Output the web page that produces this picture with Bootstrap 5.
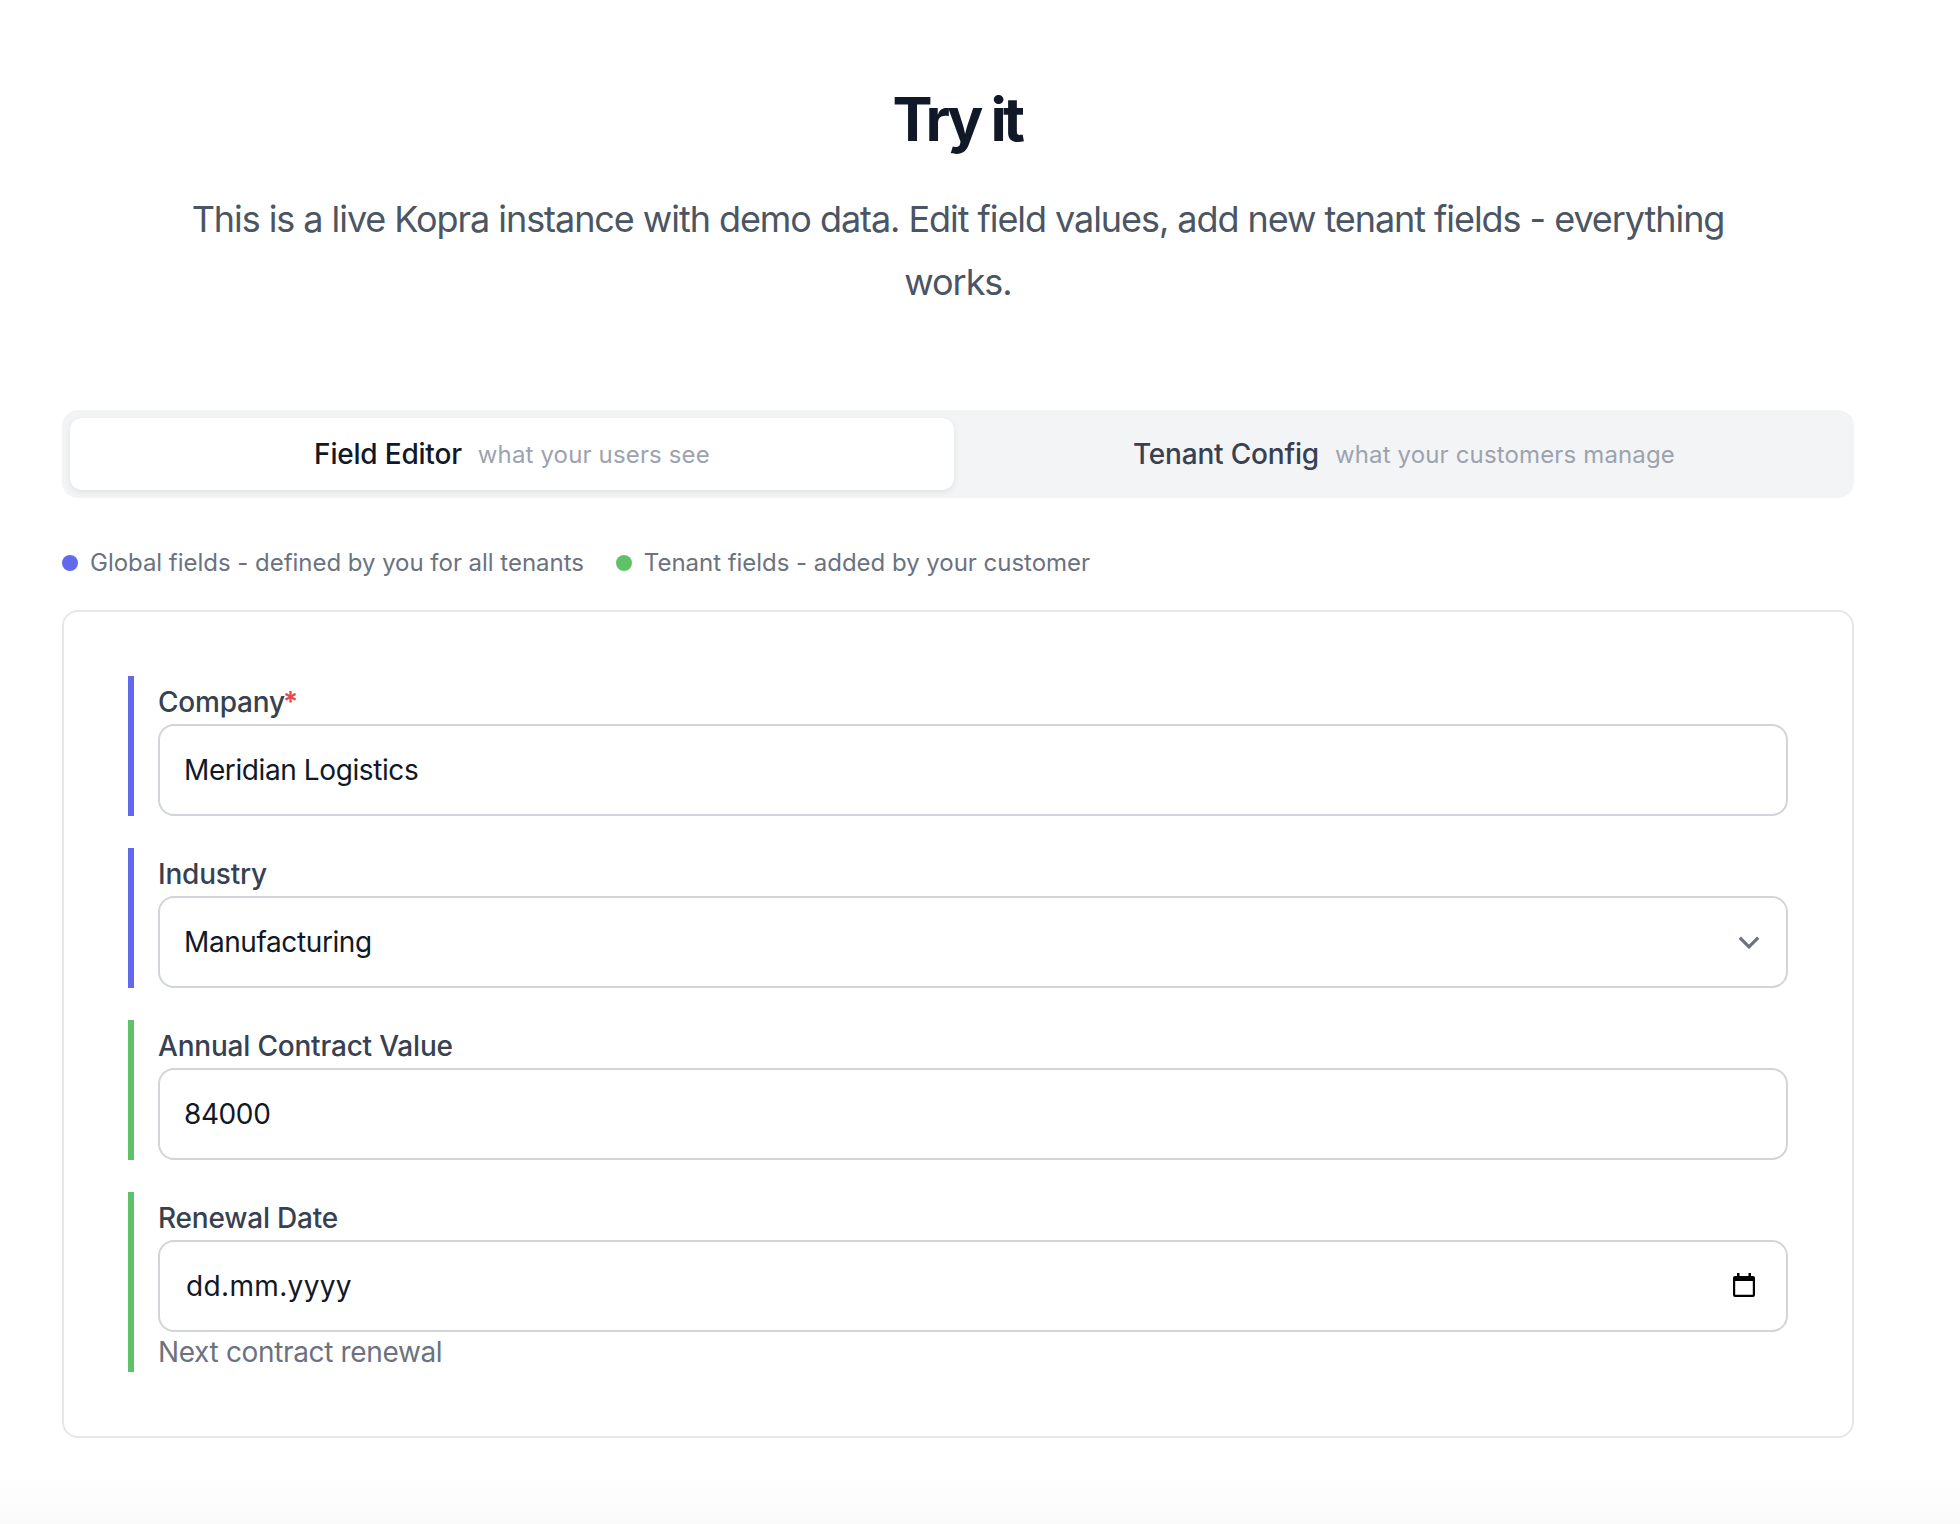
<!DOCTYPE html>
<html lang="en">
<head>
<meta charset="utf-8">
<title>Try it</title>
<link href="https://cdn.jsdelivr.net/npm/bootstrap@5.3.0/dist/css/bootstrap.min.css" rel="stylesheet">
<style>
html, body { height: 100%; }
body { font-family: "Inter", "Liberation Sans", sans-serif; background: #fff; color: #111827; -webkit-font-smoothing: antialiased; }
.page-wrap { min-height: 1524px; padding: 83px 44px 0 0; display: flex; flex-direction: column; align-items: center; background: linear-gradient(#fff 0, #fff 1470px, #fafafa 1524px); }
.try-title { font-size: 60px; line-height: 72px; font-weight: 700; letter-spacing: -3.6px; color: #111827; margin: 0 2px 33px 0; }
.try-sub { width: 1560px; font-size: 36px; line-height: 63px; letter-spacing: -1.06px; color: #4b5563; margin-bottom: 96px; }
.demo { width: 1792px; }
.tabbar { background: #f3f4f6; border-radius: 16px; padding: 8px; height: 88px; margin-bottom: 49px; }
.tabitem { flex: 1 1 0; height: 72px; border-radius: 12px; gap: 16px; font-size: 28px; font-weight: 500; letter-spacing: -.2px; color: #374151; }
.tabitem.on { background: #fff; color: #111827; box-shadow: 0 2px 6px rgba(0,0,0,.08); }
.tabhint { font-size: 24px; font-weight: 400; letter-spacing: .15px; color: #9ca3af; padding-top: 2px; }
.legendrow { height: 32px; gap: 32px; margin-bottom: 31px; font-size: 24px; line-height: 32px; letter-spacing: -.03px; color: #6b7280; }
.legenditem { gap: 12px; }
.dot { width: 16px; height: 16px; border-radius: 50%; }
.dot-global { background: #6269ec; }
.dot-tenant { background: #5fc26b; }
.formcard { border: 2px solid #e5e7eb; border-radius: 16px; padding: 64px; gap: 32px; background: #fff; }
.fieldrow { border-left: 6px solid #6269ec; padding-left: 24px; }
.fieldrow.tenant { border-left-color: #5fc26b; }
.fieldlabel { display: block; font-size: 28px; line-height: 40px; font-weight: 500; letter-spacing: -.2px; color: #374151; padding-top: 6px; margin-bottom: 2px; }
.req { color: #e5484d; font-weight: 600; letter-spacing: -1px; margin-left: -2px; }
.fieldinput.form-control, .fieldinput.form-select { height: 92px; border: 2px solid #d1d5db; border-radius: 16px; padding: 24px; font-size: 28px; line-height: 40px; letter-spacing: -.4px; color: #111827; box-shadow: none; }
.fieldinput.form-select { background-image: url("data:image/svg+xml,%3Csvg xmlns='http://www.w3.org/2000/svg' viewBox='0 0 20 12'%3E%3Cpath d='M1.5 1.5l8.5 8.5 8.5-8.5' fill='none' stroke='%236b7280' stroke-width='3'/%3E%3C/svg%3E"); background-position: right 26px center; background-size: 22px 13px; }
.fieldinput.form-control.dateinput { padding-left: 26px; letter-spacing: .35px; }
.calicon { right: 33px; top: 33px; width: 22px; height: 24px; pointer-events: none; }
.fieldhint { font-size: 28px; line-height: 40px; letter-spacing: -.35px; color: #6b7280; }
</style>
</head>
<body>
<div class="page-wrap">
  <h1 class="try-title text-center">Try it</h1>
  <p class="try-sub text-center">This is a live Kopra instance with demo data. Edit field values, add new tenant fields - everything works.</p>
  <div class="demo">
    <div class="tabbar d-flex gap-2">
      <div class="tabitem on d-flex align-items-center justify-content-center"><span>Field Editor</span><span class="tabhint">what your users see</span></div>
      <div class="tabitem d-flex align-items-center justify-content-center"><span>Tenant Config</span><span class="tabhint">what your customers manage</span></div>
    </div>
    <div class="legendrow d-flex align-items-center">
      <div class="legenditem d-flex align-items-center"><span class="dot dot-global"></span><span>Global fields - defined by you for all tenants</span></div>
      <div class="legenditem d-flex align-items-center"><span class="dot dot-tenant"></span><span>Tenant fields - added by your customer</span></div>
    </div>
    <form class="formcard d-flex flex-column">
      <div class="fieldrow">
        <label class="fieldlabel" for="f1">Company<span class="req">*</span></label>
        <input id="f1" class="form-control fieldinput" type="text" value="Meridian Logistics">
      </div>
      <div class="fieldrow">
        <label class="fieldlabel" for="f2">Industry</label>
        <select id="f2" class="form-select fieldinput"><option>Manufacturing</option></select>
      </div>
      <div class="fieldrow tenant">
        <label class="fieldlabel" for="f3">Annual Contract Value</label>
        <input id="f3" class="form-control fieldinput" type="text" value="84000">
      </div>
      <div class="fieldrow tenant">
        <label class="fieldlabel" for="f4">Renewal Date</label>
        <div class="position-relative">
          <input id="f4" class="form-control fieldinput dateinput" type="text" value="dd.mm.yyyy">
          <svg class="calicon position-absolute" viewBox="0 0 22 24" aria-hidden="true"><path d="M4 0h2.5v3h9V0H18v3h2a2 2 0 0 1 2 2v17a2 2 0 0 1-2 2H2a2 2 0 0 1-2-2V5a2 2 0 0 1 2-2h2zM2.2 8v13.8h17.6V8z" fill="#000" fill-rule="evenodd"/></svg>
        </div>
        <div class="fieldhint">Next contract renewal</div>
      </div>
    </form>
  </div>
</div>
<script src="https://cdn.jsdelivr.net/npm/bootstrap@5.3.0/dist/js/bootstrap.bundle.min.js"></script>
</body>
</html>
